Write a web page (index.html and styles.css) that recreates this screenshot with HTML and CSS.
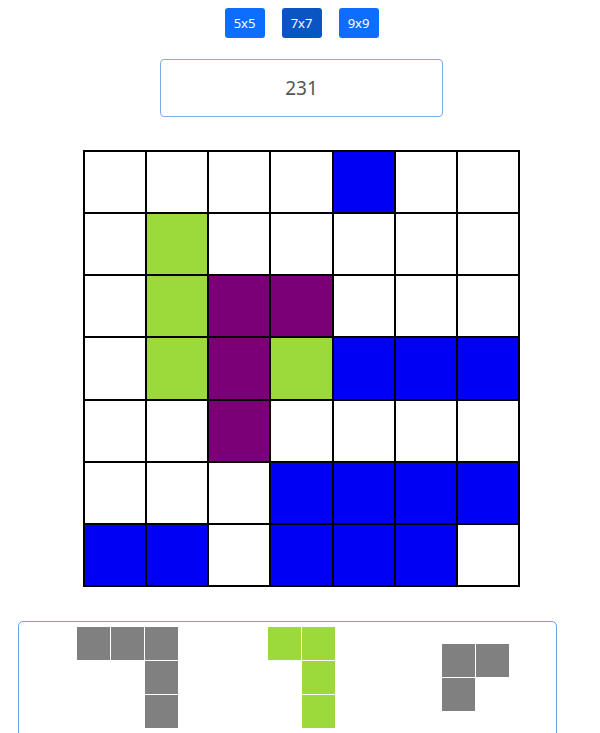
FILE: index.html
```html
<!DOCTYPE html>
<html lang="en">
<head>
    <meta charset="UTF-8">
    <meta name="viewport" content="width=device-width, initial-scale=1.0">
    <title>Block Puzzle</title>
    <link rel="stylesheet" href="styles.css">
</head>
<body>
    <div class="game">
        <div class="size-bar">
            <button class="size-btn">5x5</button>
            <button class="size-btn active">7x7</button>
            <button class="size-btn">9x9</button>
        </div>

        <div class="score">231</div>

        <div class="board">
            <div class="cell"></div><div class="cell"></div><div class="cell"></div><div class="cell"></div><div class="cell blue"></div><div class="cell"></div><div class="cell"></div>
            <div class="cell"></div><div class="cell green"></div><div class="cell"></div><div class="cell"></div><div class="cell"></div><div class="cell"></div><div class="cell"></div>
            <div class="cell"></div><div class="cell green"></div><div class="cell purple"></div><div class="cell purple"></div><div class="cell"></div><div class="cell"></div><div class="cell"></div>
            <div class="cell"></div><div class="cell green"></div><div class="cell purple"></div><div class="cell green"></div><div class="cell blue"></div><div class="cell blue"></div><div class="cell blue"></div>
            <div class="cell"></div><div class="cell"></div><div class="cell purple"></div><div class="cell"></div><div class="cell"></div><div class="cell"></div><div class="cell"></div>
            <div class="cell"></div><div class="cell"></div><div class="cell"></div><div class="cell blue"></div><div class="cell blue"></div><div class="cell blue"></div><div class="cell blue"></div>
            <div class="cell blue"></div><div class="cell blue"></div><div class="cell"></div><div class="cell blue"></div><div class="cell blue"></div><div class="cell blue"></div><div class="cell"></div>
        </div>
    </div>

    <div class="pieces">
        <div class="slot">
            <div class="piece cols-3">
                <div class="block gray"></div><div class="block gray"></div><div class="block gray"></div>
                <div class="block"></div><div class="block"></div><div class="block gray"></div>
                <div class="block"></div><div class="block"></div><div class="block gray"></div>
            </div>
        </div>
        <div class="slot">
            <div class="piece cols-2">
                <div class="block green"></div><div class="block green"></div>
                <div class="block"></div><div class="block green"></div>
                <div class="block"></div><div class="block green"></div>
            </div>
        </div>
        <div class="slot">
            <div class="piece cols-2">
                <div class="block gray"></div><div class="block gray"></div>
                <div class="block gray"></div><div class="block"></div>
            </div>
        </div>
    </div>
</body>
</html>
```

FILE: styles.css
```css
html, body {
    overflow: hidden;
}

body {
    margin: 8px;
    font-family: 'Noto Sans', 'Open Sans', sans-serif;
    background: #fff;
}

.game {
    display: flex;
    flex-direction: column;
    align-items: center;
    padding-left: 3px;
}

.size-bar {
    display: flex;
    gap: 17px;
}

.size-btn {
    width: 40px;
    height: 30px;
    padding: 0;
    border: none;
    border-radius: 3px;
    background: #0d6efd;
    color: #fff;
    font-family: inherit;
    font-size: 13px;
    cursor: pointer;
}

.size-btn.active {
    background: #0a55c4;
}

.score {
    width: 283px;
    height: 58px;
    box-sizing: border-box;
    margin-top: 21px;
    border: 1px solid #80abe8;
    border-radius: 4px;
    display: flex;
    align-items: center;
    justify-content: center;
    font-size: 19px;
    color: #555;
}

.board {
    width: 437px;
    margin-top: 33px;
    box-sizing: border-box;
    border: 1px solid #000;
    display: grid;
    grid-template-columns: repeat(7, 1fr);
}

.cell {
    height: 62.15px;
    box-sizing: border-box;
    border: 1px solid #000;
    background: #fff;
}

.cell.blue { background: #0000f5; }
.cell.green { background: #9cd93a; }
.cell.purple { background: #7b0078; }

/* 待放置的方块 */
.pieces {
    width: 539px;
    box-sizing: border-box;
    margin: 34px 0 0 10px;
    padding: 5px 0 12px 21px;
    border: 1px solid #6f9fe6;
    border-radius: 5px;
    display: grid;
    grid-template-columns: repeat(3, 174px);
    align-items: center;
    justify-items: center;
}

.piece {
    display: grid;
    gap: 1px;
}

.piece.cols-2 { grid-template-columns: repeat(2, 33px); }
.piece.cols-3 { grid-template-columns: repeat(3, 33px); }

.block {
    height: 33px;
}

.block.gray { background: #808080; }
.block.green { background: #9cd93a; }
```
